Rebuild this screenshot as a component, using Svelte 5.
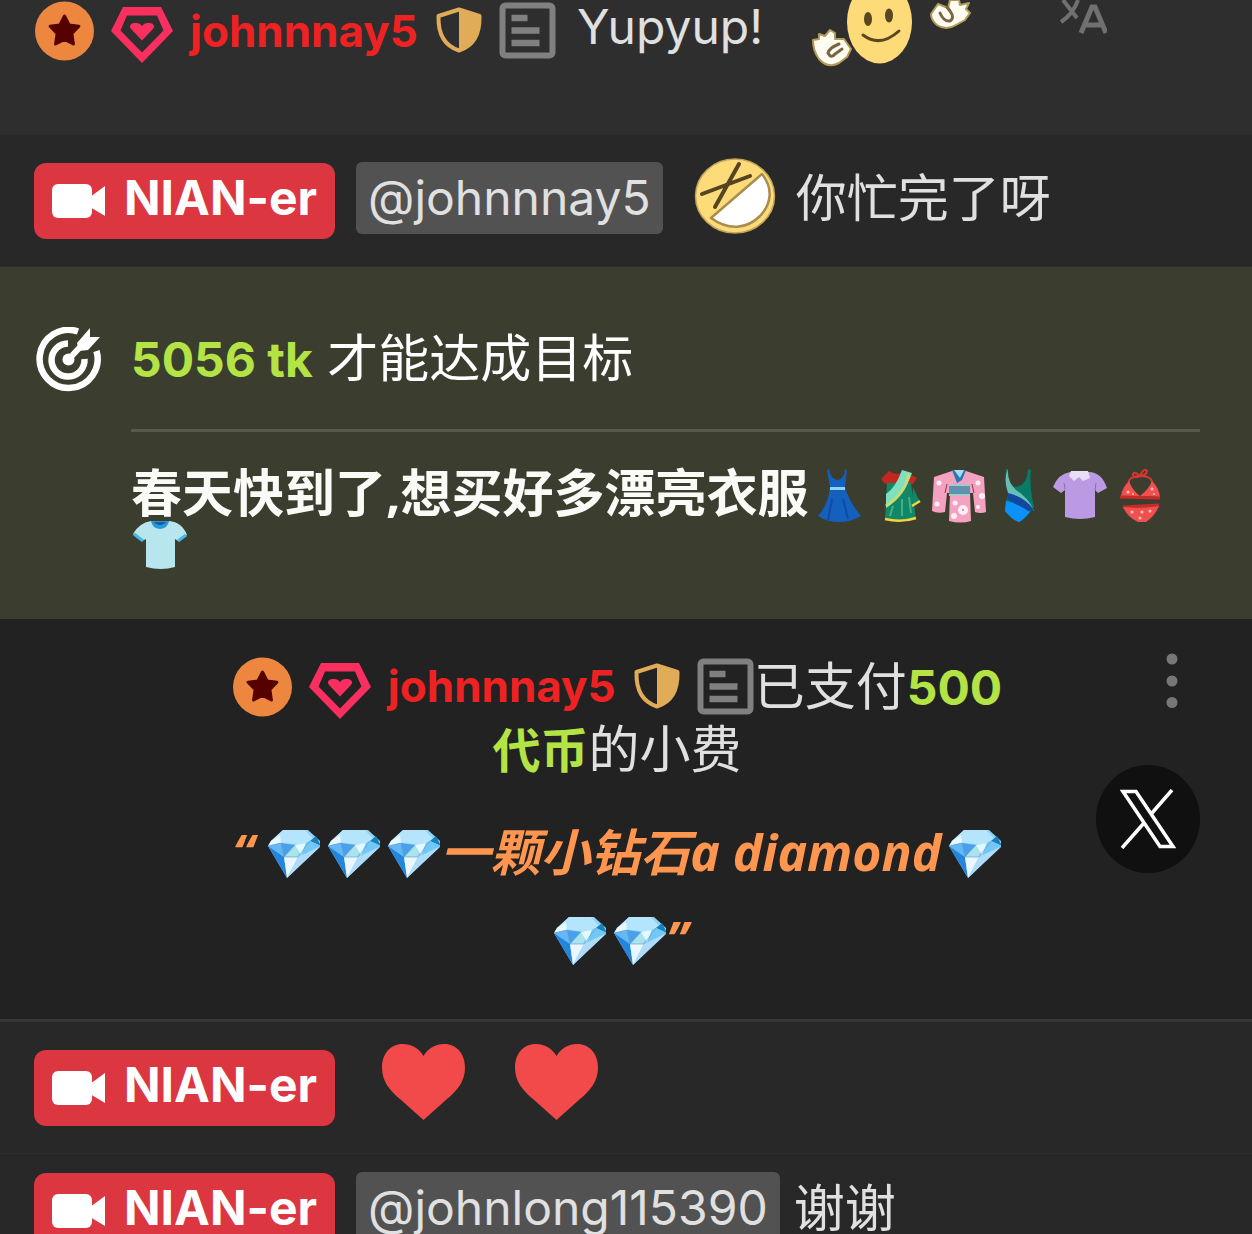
<script>
  const host = "NIAN-er";
  const fan = "johnnnay5";
  const outfits = ["dress", "sari", "kimono", "swimsuit", "blouse", "bikini", "tshirt"];
</script>

{#snippet user()}
  <span class="user">
    <svg width="60" height="62" viewBox="0 0 60 62">
      <circle cx="30.500" cy="31" r="29.500" fill="#ed873f" />
      <path
        d="M30.500 16l4.600 9 9.800 1.200-7 7.200 1.500 10.600-8.900-4.500-8.900 4.500 1.500-10.600-7-7.200 9.800-1.200z"
        fill="#560000" stroke="#560000" stroke-width="3" stroke-linejoin="round"
      />
    </svg>
    <svg width="62" height="62" viewBox="0 0 62 62">
      <path
        fill="#f92f60" fill-rule="evenodd"
        d="M12 7h38l12 24-31 32L0 31zM16 15.500 9.500 30.500 31 52.500 52.500 30.500 46 15.500z"
      />
      <path
        d="M19 25.500q1-2.500 4-2.500h3q3 0 5 3 2-3 5-3h3q3 0 4 2.500c.5 2-1 3.500-2.500 5L31 40.500 21.500 30.500c-1.500-1.500-3-3-2.500-5z"
        fill="#f92f60"
      />
    </svg>
    <a href="#{fan}">{fan}</a>
    <svg width="47" height="62" viewBox="0 0 47 62">
      <path
        d="M24 9.500l20.500 6.500c.5 16-5 29.500-20.500 34.500C8.500 45.500 3 32 3.500 16z"
        fill="none" stroke="#e0ac58" stroke-width="4" stroke-linejoin="round"
      />
      <path d="M24 9l20.500 7c.5 16-5 30-20.500 35z" fill="#e0ac58" />
    </svg>
    <svg width="57" height="62" viewBox="0 0 57 62">
      <rect x="3.500" y="5.500" width="50" height="50" rx="3" fill="none" stroke="#808080" stroke-width="6" />
      <path d="M12.500 18h16M12.500 30.500h28M12.500 43h28" stroke="#808080" stroke-width="6.500" />
    </svg>
  </span>
{/snippet}

{#snippet hostChip()}
  <a class="host" href="#{host}">
    <svg width="54" height="36" viewBox="0 0 54 36">
      <rect y="1" width="40" height="34" rx="6" fill="#fff" />
      <path d="M38 14l15-11v30L38 24z" fill="#fff" />
    </svg>
    <span>{host}</span>
  </a>
{/snippet}

{#snippet heart()}
  <svg width="133" height="96" viewBox="0 0 133 96">
    <path
      d="M67.500 16C72 8 80 4 88 4 101 4 109 14 109 28c0 13-8 23-18 31L67.500 80 44 59C34 51 26 41 26 28 26 14 34 4 47 4c8 0 16 4 20.500 12z"
      fill="#f24a4a"
    />
  </svg>
{/snippet}

{#snippet diamond()}
  <svg class="diamond" width="60" height="50" viewBox="-4 0 60 50">
    <path d="M19 1h25l12 11 1 4-34 33L4 17l3-5z" fill="#8fd3fb" />
    <path d="M19 1h22l8 9-11 6-17-2L7 12z" fill="#b5e5fd" />
    <path d="M7 12 16 6l1 8-13 3z" fill="#e8f8ff" />
    <path d="M4 17l13-3 3 14z" fill="#64b8f5" />
    <path d="M17 14l14 2-11 12z" fill="#4c9fe9" />
    <path d="M31 16l7 0-5 12H20z" fill="#a9e4ee" />
    <path d="M31 16l11-2-5 12z" fill="#e5f8ff" />
    <path d="M46 12l6-5 5 10z" fill="#1581bd" />
    <path d="M42 14l4-2 11 5-20 10z" fill="#72c8f5" />
    <path d="M4 17l16 11 3 21z" fill="#2385dc" />
    <path d="M20 28h14L23 49z" fill="#eaf7ff" />
    <path d="M34 28l23-11-34 32z" fill="#aedcfa" />
    <path d="M4 17l13-3 3 14h14l12-16M20 28l11-12" fill="none" stroke="#5d9cc4" stroke-width=".6" />
  </svg>
{/snippet}

{#snippet outfit(kind)}
  <svg class="outfit" width="60" height="54" viewBox="0 0 60 54">
    {#if kind === "dress"}
      <path d="M20 0q1 10 9 11 7-2 7-11l2 1-2 17q4 15 16 29-10 6-22 6T9 47q11-13 12-29L18 1z" fill="#1560bd" />
      <path d="M21 18h15v3H21z" fill="#8bd5fa" />
      <path d="M23 30l-4 21M34 30l5 20" stroke="#0d4da1" stroke-width="2" />
    {:else if kind === "sari"}
      <path d="M20 2q8 6 15 0l13 7-4 6-25-1-3 1-4-5z" fill="#c3271f" />
      <path d="M18 14h24l5 36q-15 4-31 1z" fill="#108767" />
      <path d="M44 18l7 15-8 5z" fill="#108767" />
      <path d="M33 1l10 3Q35 27 17 39V25Q27 18 33 1z" fill="#7fe0c0" />
      <path d="M40 5q-4 20-23 32" fill="none" stroke="#c9db72" stroke-width="3" />
      <path d="M16 50q16 4 31-1M51 32l-8 5" fill="none" stroke="#f2d43c" stroke-width="2.500" />
      <path d="M24 37l-3 10M33 30v17M40 28l2 16" stroke="#46ae83" stroke-width="2" />
    {:else if kind === "kimono"}
      <path d="M5 8l18-6h14l18 6 2 35q-5 2-11 0l-2-19-3 0 1 28q-10 3-22 0l1-28h-3l-2 19q-7 2-13-1z" fill="#f5a2c1" />
      <path d="M23 1h14l-4 10-5 3z" fill="#2577b5" />
      <path d="M25 1l6 8 4-8z" fill="#a8ddf0" />
      <path d="M20 15h21v12H20z" fill="#5e92ad" />
      <path d="M20 16h21M20 26h21" stroke="#a7c8d3" stroke-width="2" />
      <path d="M18 15l-2 9M43 15l2 9" stroke="#853858" stroke-width="1" />
      <g fill="#fff0f5">
        <circle cx="10" cy="14" r="2.500" /><circle cx="8" cy="35" r="2.500" /><circle cx="49" cy="14" r="2.500" />
        <circle cx="53" cy="27" r="3" /><circle cx="49" cy="38" r="2" /><circle cx="26" cy="34" r="2.500" />
        <circle cx="34" cy="41" r="5" /><circle cx="25" cy="47" r="3" />
      </g>
      <circle cx="34" cy="41" r="1" fill="#e96999" />
    {:else if kind === "swimsuit"}
      <path d="M19 0q-1 15 7 18Q38 17 39 0l3 1q-2 15 3 37-7 10-14 15-6-1-15-11 1-13 5-20-6-8-4-22z" fill="#087a68" />
      <path d="M19 0q-1 13 8 21 14 9 18 21l-12-8-14-10Q14 10 19 0z" fill="#66beb4" />
      <path d="M19 24q17 4 26 17l-7 1-20-12z" fill="#1048a0" />
      <path d="M17 32q10 2 24 11-7 8-11 10-7-2-14-11z" fill="#0c91fa" />
    {:else if kind === "blouse"}
      <path d="M21 3h20q12 1 17 16l-9 5-3-3v27q-15 4-30 0V21l-4 3-8-6Q9 5 21 3z" fill="#bc9ae3" />
      <path d="M16 20l-1-6M46 21l1-7" stroke="#886bb4" stroke-width="1" />
      <path d="M22 2h17l2 7-7 3-4-4-5 4-5-5z" fill="#e8dcf8" />
    {:else if kind === "bikini"}
      <path
        d="M31 7Q18 8 20 15M31 7q13 0 12 8M31 7q-7-6-7-1 1 4 7 1 4-9 7-5 0 4-7 5"
        fill="none" stroke="#d83532" stroke-width="2"
      />
      <path d="M20 12q3 9 11 15H12q1-8 8-15zM43 12q-3 8-12 15l20 1q-1-9-8-16z" fill="#f0504f" />
      <path d="M11 28l40 1M14 38l36-2" stroke="#cb2927" stroke-width="3" />
      <path d="M14 38q18 2 36-1-4 10-13 16h-8Q18 48 14 38z" fill="#f0504f" />
      <g fill="#ffc1bb">
        <circle cx="19" cy="23" r="1.500" /><circle cx="24" cy="25" r="1" /><circle cx="43" cy="20" r="1.500" />
        <circle cx="45" cy="25" r="1" /><circle cx="23" cy="43" r="1.500" /><circle cx="33" cy="43" r="1.500" />
        <circle cx="41" cy="42" r="1.500" /><circle cx="31" cy="49" r="1.500" />
      </g>
    {:else}
      <path d="M20 2h18q13 1 18 14l-9 6-3-2v28q-14 4-29 0V20l-4 2-9-7Q8 4 20 2z" fill="#b8e6ee" />
      <path d="M20 2h18q-1 7-9 8-8-1-9-8z" fill="#2699da" />
      <path d="M3 15l9 7M55 16l-8 6" stroke="#48b6e6" stroke-width="3" />
      <path d="M23 3h12q-2 3-6 3t-6-3z" fill="#12619c" />
    {/if}
  </svg>
{/snippet}

<main class="chat">
  <div class="message first">
    {@render user()}
    <span class="reply">Yupyup!</span>
    <svg class="hug" width="160" height="68" viewBox="0 0 160 68">
      <ellipse cx="67.500" cy="22" rx="32.500" ry="41.500" fill="#fddb79" />
      <ellipse cx="56" cy="19" rx="4" ry="7" fill="#58471f" />
      <ellipse cx="77" cy="15.500" rx="4" ry="7" fill="#58471f" />
      <path d="M51 35q17 13 36-4" fill="none" stroke="#58471f" stroke-width="3" stroke-linecap="round" />
      <g stroke="#b39b5a" stroke-width="2" stroke-linejoin="round" fill="#fffdf2">
        <path d="M1 40l6-1 0-5 6 2 5-6 5 3v6l9 0 7 10-4 8-8 6q-11 6-20-4Q1 51 1 40z" />
        <path d="M119 14l7-10 10 4 2-8h9l1 5 9-2-3 6 4 4-5 7-9 5q-10 6-19 0-6-5-6-11z" />
      </g>
      <path
        d="M27 44q-10 4-11 9 3 6 7 1l7-5M128 13q4 9 10 8 5-3 0-10l-3-4"
        fill="none" stroke="#776641" stroke-width="3" stroke-linecap="round"
      />
    </svg>
    <button class="translate" aria-label="翻译">
      <svg width="48" height="36" viewBox="0 0 48 36">
        <path d="M4 0l14 18M19 0Q14 14 2 22" fill="none" stroke="#707070" stroke-width="4" />
        <path d="M22 33 33 7h3l11 26M26 25h17" fill="none" stroke="#707070" stroke-width="5" />
      </svg>
    </button>
  </div>

  <div class="message">
    {@render hostChip()}
    <a class="mention" href="#{fan}">@{fan}</a>
    <svg width="105" height="96" viewBox="-7 0 105 96">
      <ellipse cx="51" cy="43" rx="39.500" ry="37" fill="#fddb79" stroke="#c3a35a" stroke-width="1.500" />
      <path d="M18 41l48-18M55 11 31 54" stroke="#54441f" stroke-width="4" stroke-linecap="round" />
      <path
        d="M78 21c11 14 10 29-2 42-13 13-31 15-49 2z"
        fill="#fff" stroke="#a78e4f" stroke-width="2.500" stroke-linejoin="round"
      />
    </svg>
    <span class="text">你忙完了呀</span>
  </div>

  <section class="goal">
    <svg width="65" height="65" viewBox="0 0 65 65" fill="none" stroke="#fff">
      <path d="M42 4.500A29 29 0 1 0 60.500 24" stroke-width="6.500" />
      <path d="M32 16.500A16.500 16.500 0 1 0 48.500 32" stroke-width="6.500" />
      <circle cx="32.500" cy="32.500" r="6" fill="#fff" stroke="none" />
      <path d="M32 33l14-15" stroke-width="6" />
      <path d="M41 16 54 1v9h10L52 23l-9 1z" fill="#fff" stroke="none" />
    </svg>
    <div class="details">
      <p class="remaining"><strong>5056 tk</strong> 才能达成目标</p>
      <h2>春天快到了,想买好多漂亮衣服{#each outfits as kind}{@render outfit(kind)}{/each}</h2>
    </div>
  </section>

  <section class="tip">
    <p class="paid">{@render user()}已支付<strong>500 代币</strong>的小费</p>
    <p class="note"><span class="open">“</span>{@render diamond()}{@render diamond()}{@render diamond()}一颗小钻石a diamond{@render diamond()}{@render diamond()}{@render diamond()}”</p>
    <button class="menu" aria-label="更多">
      <svg width="12" height="56" viewBox="0 0 12 56" fill="#777">
        <circle cx="6" cy="6" r="5.500" />
        <circle cx="6" cy="28" r="5.500" />
        <circle cx="6" cy="49.500" r="5.500" />
      </svg>
    </button>
    <button class="share" aria-label="X">
      <svg width="56" height="60" viewBox="0 0 56 60" fill="none" stroke="#fff" stroke-width="3.500">
        <path d="M3 2.500h13l37 55H40z" />
        <path d="M52 1 32 24M24 34 2 59" />
      </svg>
    </button>
  </section>

  <div class="message">
    {@render hostChip()}
    <span class="hearts">{@render heart()}{@render heart()}</span>
  </div>

  <div class="message last">
    {@render hostChip()}
    <a class="mention" href="#johnlong115390">@johnlong115390</a>
    <span class="text">谢谢</span>
  </div>
</main>

<style>
  :global(body) {
    margin: 0;
    background: #282828;
  }

  .chat {
    height: 100vh;
    overflow: hidden;
    color: #e0e0e0;
    font-family: Inter, "Noto Sans CJK SC", sans-serif;
    font-size: 48px;
    line-height: 60px;
  }

  p,
  h2 {
    margin: 0;
  }

  a {
    text-decoration: none;
  }

  strong {
    color: #b4e346;
    font-size: 48px;
    line-height: 48px;
  }

  svg {
    flex: none;
  }

  button {
    padding: 0;
    border: 0;
    background: none;
    cursor: pointer;

    svg {
      display: block;
    }
  }

  .message {
    display: flex;
    align-items: center;
    gap: 14px;
    padding: 18px 34px 17px;
    border-bottom: 1px solid #2e2e2e;
    white-space: nowrap;
  }

  .first {
    align-items: flex-start;
    gap: 21px;
    padding-top: 0;
    padding-bottom: 66px;
    background: #2e2e2e;
  }

  .last {
    border: 0;
  }

  .text {
    margin-bottom: 4px;
    font-size: 51px;
  }

  .reply {
    line-height: 54px;
  }

  .user {
    display: inline-flex;
    align-items: center;
    gap: 17px;
    vertical-align: top;

    svg {
      overflow: visible;
    }

    a {
      color: #ee2222;
      font-size: 44px;
      font-weight: 700;
    }
  }

  .hug {
    margin-left: 28px;
  }

  .translate {
    margin-left: 66px;
  }

  .host {
    display: flex;
    align-items: center;
    gap: 18px;
    margin-right: 7px;
    padding: 5px 18px;
    border-radius: 12px;
    background: #dc3640;
    color: #fff;
    font-weight: 700;

    span {
      margin-bottom: 6px;
    }
  }

  .mention {
    margin-bottom: 6px;
    padding: 6px 12px;
    border-radius: 6px;
    background: #525252;
    color: #e0e0e0;
  }

  .hearts {
    display: flex;
  }

  .goal {
    display: flex;
    gap: 30px;
    padding: 60px 52px 52px 36px;
    background: #3b3d2f;
    color: #fff;
  }

  .details {
    flex: 1;
  }

  .remaining {
    padding: 2px 0 40px;
    border-bottom: 3px solid #57594b;
    font-size: 51px;
  }

  h2 {
    padding-top: 35px;
    color: #fafaf7;
    font-family: "Noto Sans", "Noto Sans CJK SC", sans-serif;
    font-size: 51px;
    line-height: 50px;
  }

  .outfit {
    margin: -8px 0;
    vertical-align: -3px;
  }

  .tip {
    position: relative;
    padding: 36px 235px 36px 217px;
    border-bottom: 3px solid #363636;
    background: #222;
    text-align: center;
  }

  .paid {
    font-size: 51px;
    line-height: 63px;
  }

  .note {
    margin-top: 28px;
    color: #ff9650;
    font-family: "Noto Sans", "Noto Sans CJK SC", sans-serif;
    font-size: 50px;
    font-style: italic;
    font-weight: 700;
    line-height: 87px;
  }

  .open {
    margin-right: 6px;
  }

  .diamond {
    vertical-align: -8px;
  }

  .menu {
    position: absolute;
    top: 34px;
    right: 74px;
  }

  .share {
    position: absolute;
    right: 52px;
    bottom: 146px;
    display: grid;
    place-items: center;
    width: 104px;
    height: 108px;
    border-radius: 50%;
    background: #101010;
  }
</style>
